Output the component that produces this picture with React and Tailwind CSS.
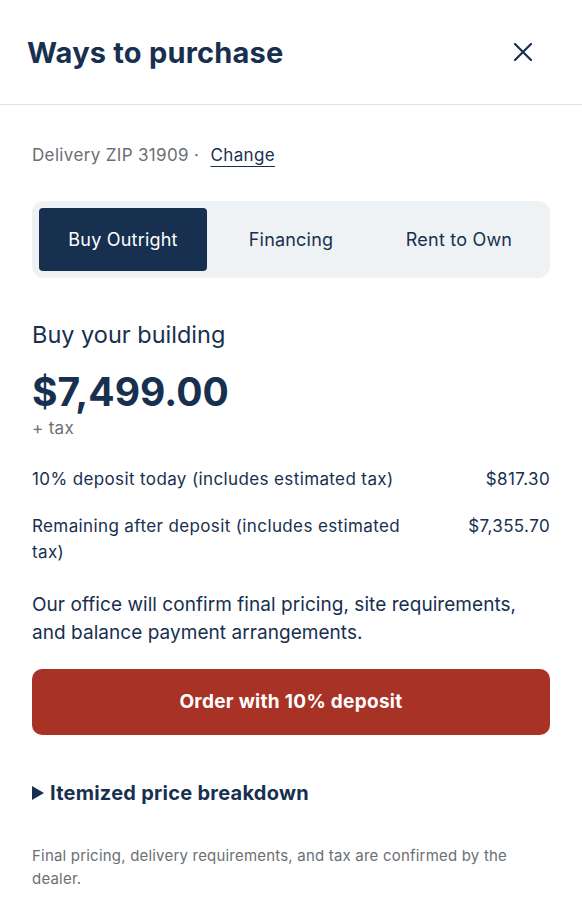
import React, { useState } from "react";

const tabs = ["Buy Outright", "Financing", "Rent to Own"];

const PurchasePanel = () => {
  const [active, setActive] = useState("Buy Outright");

  return (
    <div className="min-h-screen bg-white text-[#17304f] font-['Inter',_'Noto_Sans',_sans-serif]">
      {/* Header */}
      <div className="flex items-center justify-between h-[105px] pl-[27px] pr-[48px] border-b border-[#dfe2e5]">
        <h2 className="text-[29px] font-bold tracking-[0.2px] mt-[2px]">Ways to purchase</h2>
        <button className="text-[#17304f]" aria-label="Close">
          <svg width="22" height="22" viewBox="0 0 22 22" fill="none" stroke="currentColor" strokeWidth="2.2" strokeLinecap="round">
            <path d="M3 3L19 19M19 3L3 19" />
          </svg>
        </button>
      </div>

      {/* Content */}
      <div className="px-[32px] pt-[37px]">
        <p className="text-[17px] text-[#6b6f73] leading-[26px] tracking-[0.35px]">
          Delivery ZIP 31909 ·{" "}
          <a href="#" className="ml-[6px] text-[#17304f] underline underline-offset-[5px] decoration-1">
            Change
          </a>
        </p>

        <div className="mt-[33px] flex rounded-[12px] bg-[#eef2f4] p-[7px]">
          {tabs.map((t) => (
            <button
              key={t}
              onClick={() => setActive(t)}
              className={
                active === t
                  ? "flex-1 h-[63px] rounded-[4px] bg-[#17304f] text-white text-[18px] tracking-[0.2px]"
                  : "flex-1 h-[63px] rounded-[4px] text-[#17304f] text-[18px] tracking-[0.2px]"
              }
            >
              {t}
            </button>
          ))}
        </div>

        <h3 className="mt-[40px] text-[23.5px] leading-[34px]">Buy your building</h3>
        <div className="mt-[15px] text-[39px] font-bold leading-[50px]">$7,499.00</div>
        <div className="text-[17px] text-[#6b6f73] leading-[22px] tracking-[0.3px]">+ tax</div>

        <div className="mt-[27px] flex justify-between gap-[40px] text-[17px] leading-[26px] tracking-[0.38px]">
          <span>10% deposit today (includes estimated tax)</span>
          <span>$817.30</span>
        </div>
        <div className="mt-[21px] flex justify-between gap-[40px] text-[17px] leading-[26px] tracking-[0.38px]">
          <span className="max-w-[385px]">Remaining after deposit (includes estimated tax)</span>
          <span>$7,355.70</span>
        </div>

        <p className="mt-[26px] text-[19px] leading-[28px] tracking-[0.05px]">
          <span className="whitespace-nowrap">Our office will confirm final pricing, site requirements,</span>
          <br />
          and balance payment arrangements.
        </p>

        <button className="mt-[22px] w-full h-[66px] rounded-[10px] bg-[#a93226] text-white text-[19px] font-bold tracking-[0.3px]">
          Order with 10% deposit
        </button>

        <div className="mt-[43px] flex items-center gap-[6px] text-[20px] font-bold tracking-[0.25px]">
          <svg width="12" height="14" viewBox="0 0 12 14" fill="currentColor">
            <path d="M0 0L12 7L0 14Z" />
          </svg>
          <span>Itemized price breakdown</span>
        </div>

        <p className="mt-[36px] text-[15px] leading-[23px] text-[#6b6f73] tracking-[0.2px]">
          Final pricing, delivery requirements, and tax are confirmed by the dealer.
        </p>
      </div>
    </div>
  );
};

export default function App() {
  return <PurchasePanel />;
}
